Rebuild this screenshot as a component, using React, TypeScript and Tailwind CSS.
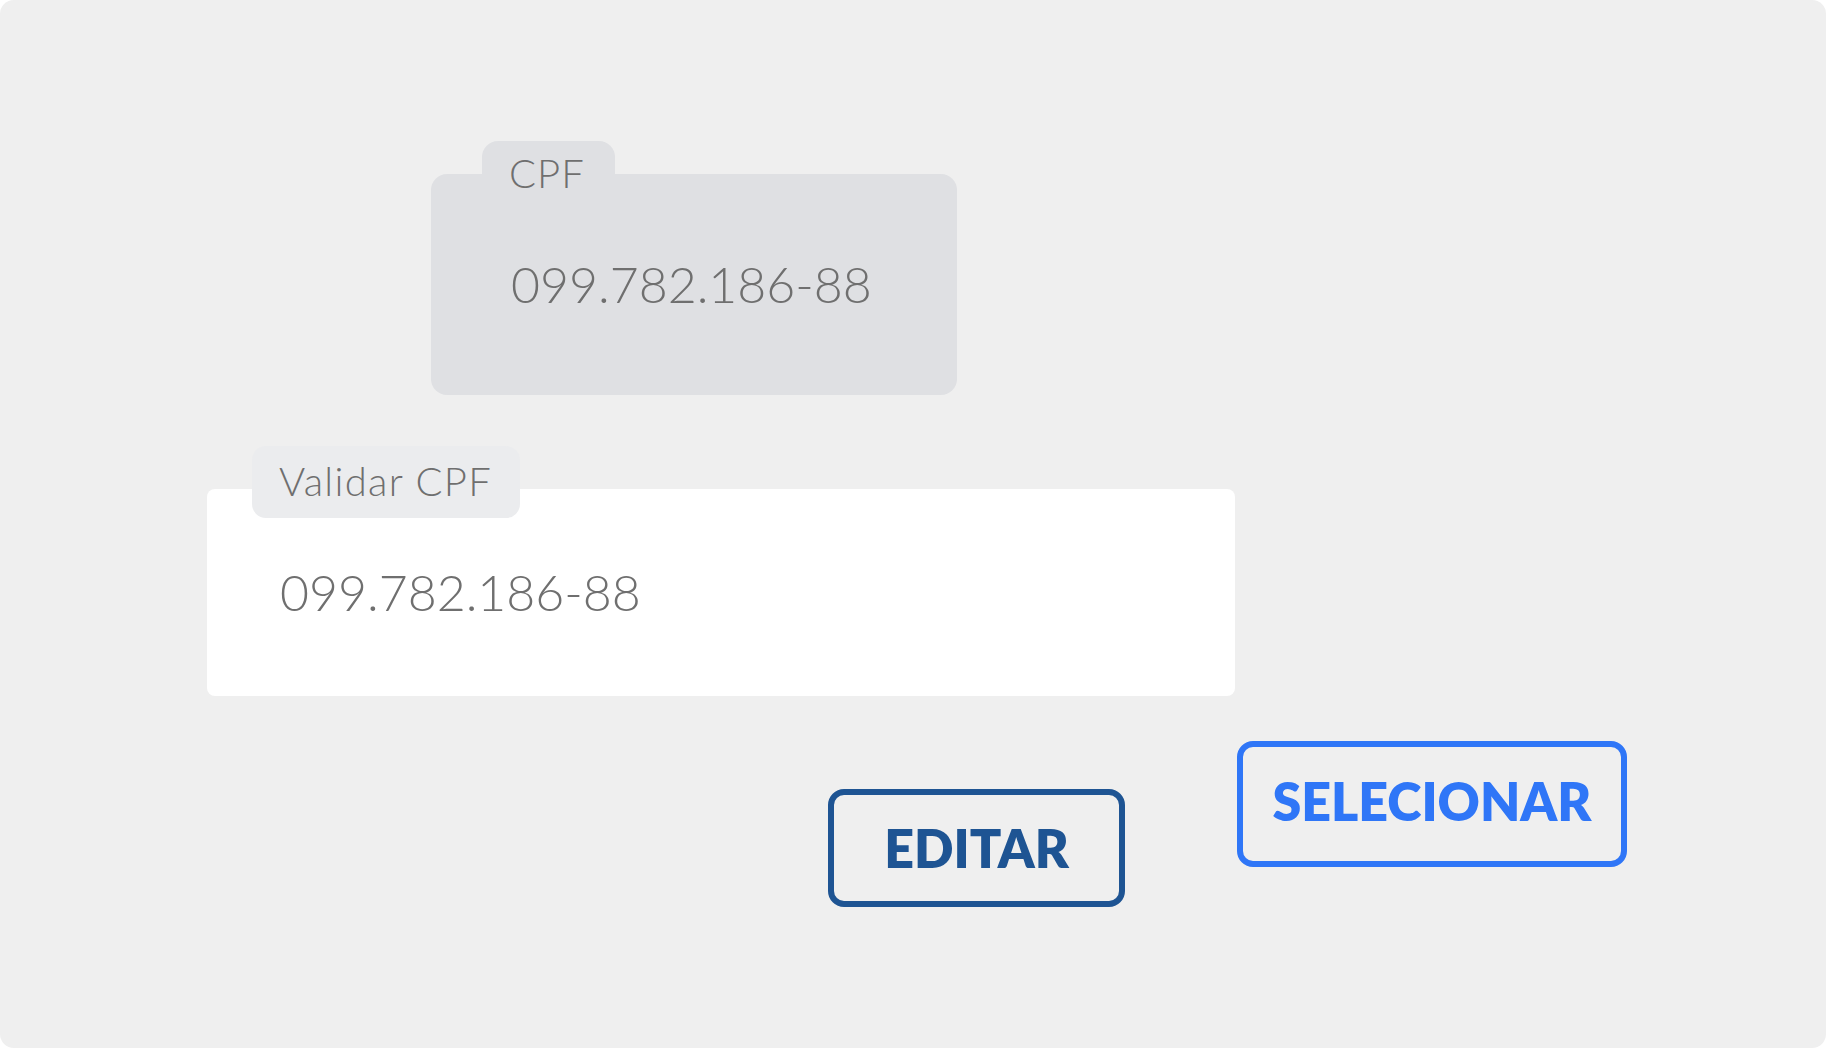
import React from "react";

export default function App() {
  return (
    <div className="w-[1826px] h-[1048px] bg-white" style={{ fontFamily: "Lato, 'Open Sans', sans-serif" }}>
      <div className="w-full h-full rounded-[14px] bg-[#efefef] flex flex-col pt-[141px] overflow-hidden">
        {/* CPF card */}
        <div className="ml-[431px] w-[526px] flex flex-col">
          <div className="relative z-10 ml-[51px] w-[133px] h-[33px] rounded-t-[16px] bg-[#dfe0e3] pt-[12px] pl-[27px]">
            <span className="block text-[40px] leading-none font-light text-[#6f6f6f] tracking-[1px] whitespace-nowrap">CPF</span>
          </div>
          <div className="h-[221px] rounded-[16px] bg-[#dfe0e3] pl-[80px] pt-[85px]">
            <span className="block text-[50px] leading-none font-light text-[#6f6f6f] tracking-normal whitespace-nowrap">099.782.186-88</span>
          </div>
        </div>

        {/* Validar CPF card */}
        <div className="ml-[207px] w-[1028px] mt-[51px] relative pt-[43px]">
          <div className="absolute top-0 left-[45px] w-[268px] h-[72px] rounded-[14px] bg-[#ebecee] pt-[15px] pl-[27px] z-10">
            <span className="block text-[40px] leading-none font-light text-[#6f6f6f] tracking-[1.3px] whitespace-nowrap">Validar CPF</span>
          </div>
          <div className="h-[207px] rounded-[8px] bg-white pl-[73px] pt-[78px]">
            <span className="block text-[50px] leading-none font-light text-[#6f6f6f] tracking-normal whitespace-nowrap">099.782.186-88</span>
          </div>
        </div>

        {/* Buttons */}
        <div className="flex items-start mt-[45px]">
          <button className="ml-[828px] mt-[48px] w-[297px] h-[118px] rounded-[16px] border-[6px] border-[#1e5493] flex items-center justify-center text-[52px] font-extrabold text-[#1e5493] leading-none">
            EDITAR
          </button>
          <button className="ml-[112px] w-[390px] h-[126px] rounded-[16px] border-[6px] border-[#2f76f7] flex items-center justify-center pb-[6px] text-[52px] font-extrabold text-[#2f76f7] leading-none">
            SELECIONAR
          </button>
        </div>
      </div>
    </div>
  );
}
